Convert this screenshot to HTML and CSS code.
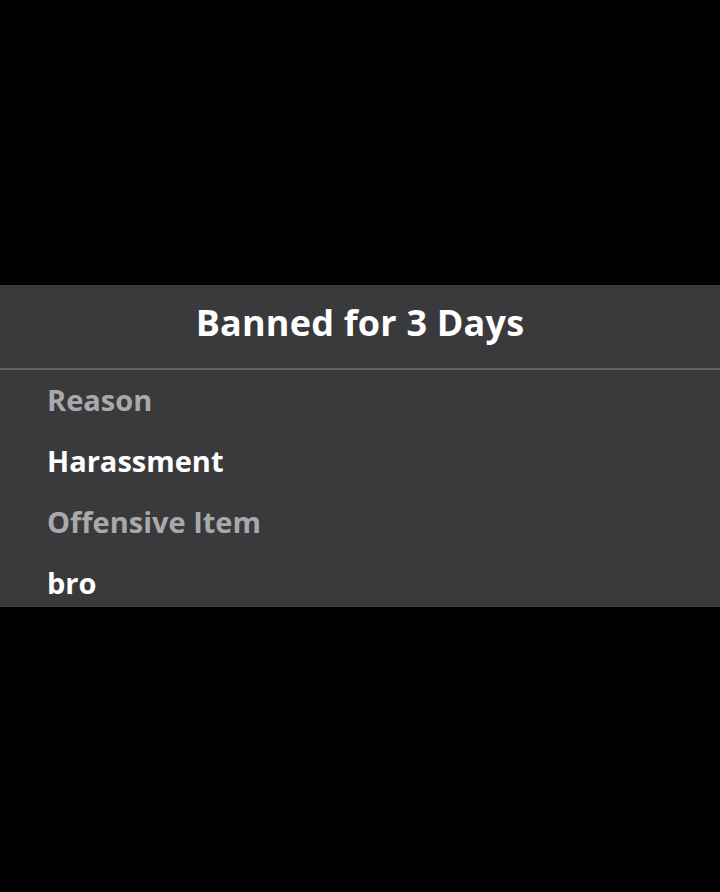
FILE: index.html
```html
<!DOCTYPE html>
<html lang="en">
<head>
    <meta charset="UTF-8">
    <meta name="viewport" content="width=device-width, initial-scale=1.0">
    <title>Banned for 3 Days</title>
    <link rel="stylesheet" href="styles.css">
</head>
<body>
    <div class="screen">
        <div class="ban-panel">
            <div class="ban-header">
                <h1>Banned for 3 Days</h1>
            </div>
            <div class="ban-details">
                <div class="label">Reason</div>
                <div class="value">Harassment</div>
                <div class="label">Offensive Item</div>
                <div class="value">bro</div>
            </div>
        </div>
    </div>
</body>
</html>
```

FILE: styles.css
```css
body {
    margin: 0;
    background: #000;
    font-family: "Open Sans", Arial, sans-serif;
}
.screen {
    min-height: 100vh;
    display: flex;
    flex-direction: column;
    justify-content: center;
}
.ban-panel {
    background: #3a3a3c;
    height: 322px;
    overflow: hidden;
}
.ban-header {
    height: 74px;
    padding-bottom: 9px;
    display: flex;
    align-items: center;
    justify-content: center;
    border-bottom: 2px solid #646466;
}
.ban-header h1 {
    margin: 0;
    color: #fff;
    font-size: 36px;
    font-weight: 700;
    letter-spacing: 0.2px;
}
.ban-details {
    margin-top: -1px;
    padding-left: 47px;
}
.label,
.value {
    font-size: 29px;
    font-weight: 700;
    line-height: 61px;
}
.label {
    color: #a9a9ab;
}
.value {
    color: #fff;
}
```
